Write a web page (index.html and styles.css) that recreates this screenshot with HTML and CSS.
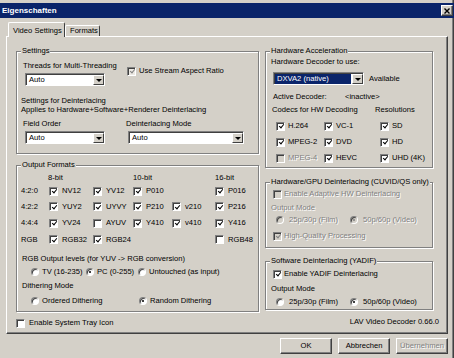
FILE: index.html
```html
<!DOCTYPE html>
<html lang="de">
<head>
    <meta charset="UTF-8">
    <meta name="viewport" content="width=device-width, initial-scale=1.0">
    <title>Eigenschaften</title>
    <link rel="stylesheet" href="styles.css">
</head>
<body>
    <div class="window">
        <div class="titlebar">
            <span class="title">Eigenschaften</span>
            <span class="close">
                <svg width="6" height="6" viewBox="0 0 6 6"><path d="M0.5 0.5 L5.5 5.5 M5.5 0.5 L0.5 5.5" stroke="#000" stroke-width="1.4"/></svg>
            </span>
        </div>

        <div class="tabs">
            <div class="tab active">Video Settings</div>
            <div class="tab">Formats</div>
        </div>

        <div class="panel">
            <div class="col-left">
                <fieldset class="group settings">
                    <legend>Settings</legend>
                    <div class="threads-row">
                        <div class="threads">
                            <div class="lbl">Threads for Multi-Threading</div>
                            <div class="select sel-small"><span class="val">Auto</span><span class="drop"></span></div>
                        </div>
                        <div class="check aspect"><span class="chk on dim"></span>Use Stream Aspect Ratio</div>
                    </div>
                    <div class="deint-note">Settings for Deinterlacing<br>Applies to Hardware+Software+Renderer Deinterlacing</div>
                    <div class="deint-row">
                        <div class="field-order">
                            <div class="lbl">Field Order</div>
                            <div class="select sel-small"><span class="val">Auto</span><span class="drop"></span></div>
                        </div>
                        <div class="deint-mode">
                            <div>Deinterlacing Mode</div>
                            <div class="select sel-mode"><span class="val">Auto</span><span class="drop"></span></div>
                        </div>
                    </div>
                </fieldset>

                <fieldset class="group formats">
                    <legend>Output Formats</legend>
                    <div class="fmt-grid">
                        <span></span><span class="hdr first">8-bit</span><span></span><span class="hdr">10-bit</span><span></span><span class="hdr">16-bit</span>

                        <span>4:2:0</span>
                        <div class="check"><span class="chk on"></span>NV12</div>
                        <div class="check"><span class="chk on"></span>YV12</div>
                        <div class="check"><span class="chk on"></span>P010</div>
                        <span></span>
                        <div class="check"><span class="chk on"></span>P016</div>

                        <span>4:2:2</span>
                        <div class="check"><span class="chk on"></span>YUY2</div>
                        <div class="check"><span class="chk on"></span>UYVY</div>
                        <div class="check"><span class="chk on"></span>P210</div>
                        <div class="check"><span class="chk on"></span>v210</div>
                        <div class="check"><span class="chk on"></span>P216</div>

                        <span>4:4:4</span>
                        <div class="check"><span class="chk on"></span>YV24</div>
                        <div class="check"><span class="chk"></span>AYUV</div>
                        <div class="check"><span class="chk on"></span>Y410</div>
                        <div class="check"><span class="chk on"></span>v410</div>
                        <div class="check"><span class="chk on"></span>Y416</div>

                        <span>RGB</span>
                        <div class="check"><span class="chk on"></span>RGB32</div>
                        <div class="check"><span class="chk on"></span>RGB24</div>
                        <span></span>
                        <span></span>
                        <div class="check"><span class="chk"></span>RGB48</div>
                    </div>

                    <div class="levels-lbl">RGB Output levels (for YUV -&gt; RGB conversion)</div>
                    <div class="radio-row levels">
                        <div class="opt o1"><span class="radio"></span>TV (16-235)</div>
                        <div class="opt o2"><span class="radio on"></span>PC (0-255)</div>
                        <div class="opt"><span class="radio"></span>Untouched (as input)</div>
                    </div>
                    <div class="dither-lbl">Dithering Mode</div>
                    <div class="radio-row dither">
                        <div class="opt o1"><span class="radio"></span>Ordered Dithering</div>
                        <div class="opt"><span class="radio on"></span>Random Dithering</div>
                    </div>
                </fieldset>

                <div class="check tray"><span class="chk"></span>Enable System Tray Icon</div>
            </div>

            <div class="col-right">
                <fieldset class="group hwaccel">
                    <legend>Hardware Acceleration</legend>
                    <div>Hardware Decoder to use:</div>
                    <div class="decoder-row">
                        <div class="select sel-dec"><span class="val hl">DXVA2 (native)</span><span class="drop"></span></div>
                        <span>Available</span>
                    </div>
                    <div class="active-row"><span class="k1">Active Decoder:</span><span>&lt;inactive&gt;</span></div>
                    <div class="codec-head"><span class="k2">Codecs for HW Decoding</span><span>Resolutions</span></div>
                    <div class="codec-grid">
                        <div class="check"><span class="chk on"></span>H.264</div>
                        <div class="check"><span class="chk on"></span>VC-1</div>
                        <div class="check"><span class="chk on"></span>SD</div>
                        <div class="check"><span class="chk on"></span>MPEG-2</div>
                        <div class="check"><span class="chk on"></span>DVD</div>
                        <div class="check"><span class="chk on"></span>HD</div>
                        <div class="check off"><span class="chk dis"></span>MPEG-4</div>
                        <div class="check"><span class="chk on"></span>HEVC</div>
                        <div class="check"><span class="chk on"></span>UHD (4K)</div>
                    </div>
                </fieldset>

                <fieldset class="group gpu">
                    <legend>Hardware/GPU Deinterlacing (CUVID/QS only)</legend>
                    <div class="check off first-line"><span class="chk dis"></span>Enable Adaptive HW Deinterlacing</div>
                    <div class="mode-lbl off">Output Mode</div>
                    <div class="radio-row modes off">
                        <div class="opt m1"><span class="radio dis"></span>25p/30p (Film)</div>
                        <div class="opt"><span class="radio dis on"></span>50p/60p (Video)</div>
                    </div>
                    <div class="check off hq"><span class="chk dis on"></span>High-Quality Processing</div>
                </fieldset>

                <fieldset class="group yadif">
                    <legend>Software Deinterlacing (YADIF)</legend>
                    <div class="check first-line"><span class="chk on"></span>Enable YADIF Deinterlacing</div>
                    <div class="mode-lbl">Output Mode</div>
                    <div class="radio-row modes">
                        <div class="opt m1"><span class="radio"></span>25p/30p (Film)</div>
                        <div class="opt"><span class="radio on"></span>50p/60p (Video)</div>
                    </div>
                </fieldset>

                <div class="version">LAV Video Decoder 0.66.0</div>
            </div>
        </div>

        <div class="buttons">
            <div class="btn">OK</div>
            <div class="btn">Abbrechen</div>
            <div class="btn off">Übernehmen</div>
        </div>
    </div>
</body>
</html>
```

FILE: styles.css
```css
body {
    margin: 0;
    background-color: #d4d0c8;
    font-family: "Liberation Sans", Arial, sans-serif;
    font-size: 7.6px;
    line-height: 10px;
    color: #000;
    white-space: nowrap;
    overflow: hidden;
}

.window {
    width: 454px;
    height: 358px;
    box-sizing: border-box;
    padding-top: 3px;
    box-shadow: inset -1px 0 #404040, inset -2px 0 #808080;
}

/* title bar */
.titlebar {
    height: 15px;
    background-color: #0a246a;
    display: flex;
    align-items: center;
    justify-content: space-between;
    padding: 0 1px 0 2px;
}

.title {
    color: #fff;
    font-weight: bold;
    font-size: 8px;
}

.close {
    width: 12px;
    height: 11px;
    box-sizing: border-box;
    background-color: #d4d0c8;
    border: 1px solid;
    border-color: #fff #404040 #404040 #fff;
    box-shadow: inset -1px -1px #808080;
    display: flex;
    align-items: center;
    justify-content: center;
}

/* tabs */
.tabs {
    display: flex;
    align-items: flex-end;
    height: 18px;
    padding-left: 8px;
}

.tab {
    height: 11px;
    padding: 0 3px;
    box-sizing: border-box;
    border: 1px solid;
    border-color: #fff #404040 transparent #fff;
    border-bottom: none;
    border-radius: 2px 2px 0 0;
    line-height: 10px;
}

.tab.active {
    height: 15px;
    width: 57px;
    margin-bottom: -1px;
    padding: 3px 3px 0 4px;
    background-color: #d4d0c8;
    position: relative;
    z-index: 1;
}

.tab + .tab {
    width: 35px;
    padding-left: 4px;
}

/* panel */
.panel {
    margin-left: 6px;
    width: 442px;
    height: 298px;
    box-sizing: border-box;
    border: 1px solid;
    border-color: #fff #404040 #404040 #fff;
    box-shadow: inset -1px -1px #808080;
    padding: 9px 0 0 9px;
    display: flex;
}

.col-left {
    width: 243px;
}

.col-right {
    width: 168px;
    margin-left: 6px;
}

/* group boxes */
.group {
    margin: 0;
    min-width: 0;
    padding: 0 5px;
    border: 1px solid #808080;
    box-shadow: inset 1px 1px #fff, 1px 1px #fff;
}

.group legend {
    padding: 0 1px;
    margin-left: -1px;
    background-color: #d4d0c8;
    line-height: 10px;
}

.settings {
    padding-top: 5px;
    padding-bottom: 9px;
}

.formats {
    margin-top: 6px;
    padding-top: 3px;
    padding-bottom: 5px;
}

.hwaccel {
    padding-top: 1px;
    padding-bottom: 1px;
}

.gpu {
    margin-top: 9px;
    padding-top: 2px;
    padding-bottom: 6px;
}

.yadif {
    margin-top: 8px;
    padding-top: 3px;
    padding-bottom: 2px;
}

/* controls */
.select {
    display: flex;
    height: 13px;
    box-sizing: border-box;
    padding: 1px 0 0 1px;
    border: 1px solid;
    border-color: #808080 #fff #fff #808080;
    box-shadow: inset 1px 1px #404040;
    background-color: #fff;
}

.select .val {
    flex: 1;
    padding-left: 2px;
    line-height: 10px;
}

.select .val.hl {
    background-color: #0a246a;
    color: #fff;
    margin-right: 1px;
}

.select .drop {
    width: 11px;
    box-sizing: border-box;
    background-color: #d4d0c8;
    border: 1px solid;
    border-color: #fff #404040 #404040 #fff;
    display: flex;
    align-items: center;
    justify-content: center;
}

.select .drop::after {
    content: "";
    border-left: 3px solid transparent;
    border-right: 3px solid transparent;
    border-top: 3px solid #000;
}

.check {
    display: flex;
    align-items: center;
    gap: 4px;
}

.chk {
    width: 9px;
    height: 9px;
    flex: none;
    box-sizing: border-box;
    border: 1px solid;
    border-color: #808080 #fff #fff #808080;
    box-shadow: inset 1px 1px #404040;
    background-color: #fff;
    position: relative;
}

.chk.on::after {
    content: "";
    position: absolute;
    left: 2.5px;
    top: 0.5px;
    width: 2px;
    height: 4px;
    border: solid #000;
    border-width: 0 1.5px 1.5px 0;
    transform: rotate(40deg);
}

.chk.dim {
    background-color: #ece9e4;
}

.chk.dim::after,
.chk.dis::after {
    border-color: #808080;
}

.chk.dis {
    background-color: #d4d0c8;
}

.radio {
    width: 8px;
    height: 8px;
    flex: none;
    box-sizing: border-box;
    border-radius: 50%;
    border: 1px solid;
    border-color: #808080 #fff #fff #808080;
    box-shadow: inset 1px 1px #404040;
    background-color: #fff;
    display: flex;
    align-items: center;
    justify-content: center;
}

.radio.on::after {
    content: "";
    width: 2px;
    height: 2px;
    border-radius: 50%;
    background-color: #000;
}

.radio.dis {
    background-color: #d4d0c8;
}

.radio.dis.on::after {
    background-color: #808080;
}

.off {
    color: #808080;
    text-shadow: 1px 1px #fff;
}

.radio-row {
    display: flex;
}

.opt {
    display: flex;
    align-items: center;
    gap: 3px;
}

/* settings group */
.threads-row {
    display: flex;
}

.threads {
    width: 105px;
}

.lbl {
    padding-left: 1px;
}

.sel-small {
    width: 80px;
    margin-top: 2px;
    margin-left: 3px;
}

.aspect {
    align-self: flex-start;
    margin-top: 5px;
    gap: 3px;
}

.deint-note {
    margin-top: 10px;
    margin-left: -1px;
    line-height: 9px;
}

.deint-row {
    display: flex;
    margin-top: 5px;
}

.field-order {
    width: 104px;
}

.sel-mode {
    width: 116px;
    margin-top: 2px;
    margin-left: 2px;
}

/* output formats */
.fmt-grid {
    display: grid;
    grid-template-columns: 28px 44px 40px 39px 43px 1fr;
    grid-template-rows: 10px 16px 15px 18px 15px;
    align-items: center;
    margin-left: -1px;
}

.hdr.first {
    margin-left: -1px;
}

.levels-lbl {
    margin-top: 7px;
}

.levels {
    margin-top: 3px;
}

.levels .o1 {
    width: 55px;
    margin-left: 9px;
}

.levels .o2 {
    width: 52px;
}

.dither-lbl {
    margin-top: 4px;
}

.dither {
    margin-top: 5px;
}

.dither .o1 {
    width: 108px;
    margin-left: 9px;
}

.tray {
    margin-top: 6px;
}

/* right column */
.decoder-row {
    display: flex;
    align-items: center;
    gap: 5px;
    margin-top: 5px;
    margin-left: 2px;
}

.sel-dec {
    width: 91px;
}

.active-row {
    display: flex;
    margin-top: 7px;
    margin-left: 2px;
}

.k1 {
    width: 72px;
}

.codec-head {
    display: flex;
    margin-top: 3px;
    margin-left: 1px;
}

.k2 {
    width: 103px;
}

.codec-grid {
    display: grid;
    grid-template-columns: 48px 56px 1fr;
    grid-template-rows: 16px 16px 16px;
    align-items: center;
    margin-top: 3px;
    margin-left: 5px;
}

.codec-grid .check {
    gap: 3px;
}

.first-line {
    margin-left: 2px;
    gap: 2px;
}

.mode-lbl {
    margin-top: 4px;
}

.yadif .mode-lbl {
    margin-top: 5px;
}

.modes {
    margin-top: 2px;
    margin-left: 5px;
}

.yadif .modes {
    margin-top: 3px;
}

.modes .opt {
    gap: 5px;
}

.modes .m1 {
    width: 74px;
}

.hq {
    margin-top: 6px;
    margin-left: 2px;
    gap: 2px;
}

.version {
    margin-top: 7px;
    margin-right: -6px;
    text-align: right;
}

/* dialog buttons */
.buttons {
    display: flex;
    justify-content: flex-end;
    gap: 6px;
    margin-top: 4px;
    padding-right: 6px;
}

.btn {
    width: 52px;
    height: 16px;
    box-sizing: border-box;
    border: 1px solid;
    border-color: #fff #404040 #404040 #fff;
    box-shadow: inset -1px -1px #808080;
    display: flex;
    align-items: center;
    justify-content: center;
}
```
